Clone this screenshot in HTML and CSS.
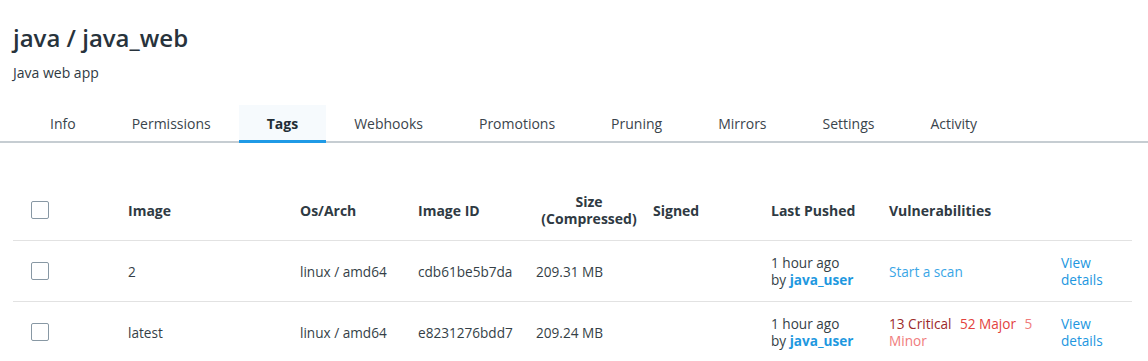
FILE: index.html
```html
<!DOCTYPE html>
<html lang="en">
<head>
    <meta charset="UTF-8" />
    <meta name="viewport" content="width=device-width, initial-scale=1" />
    <title>java / java_web</title>
    <link rel="stylesheet" href="styles.css">
</head>
<body>
    <div class="repo-header">
        <h1 class="repo-title">java / java_web</h1>
        <p class="repo-desc">Java web app</p>
    </div>
    <nav class="tabs">
        <a class="tab">Info</a>
        <a class="tab">Permissions</a>
        <a class="tab active">Tags</a>
        <a class="tab">Webhooks</a>
        <a class="tab">Promotions</a>
        <a class="tab">Pruning</a>
        <a class="tab">Mirrors</a>
        <a class="tab">Settings</a>
        <a class="tab">Activity</a>
    </nav>
    <table class="tags-table">
        <colgroup>
            <col class="c-check"><col class="c-image"><col class="c-os"><col class="c-id"><col class="c-size">
            <col class="c-signed"><col class="c-pushed"><col class="c-vuln"><col class="c-action">
        </colgroup>
        <thead>
            <tr>
                <th class="check-cell"><span class="checkbox"></span></th>
                <th>Image</th>
                <th>Os/Arch</th>
                <th>Image ID</th>
                <th class="size-head">Size<br>(Compressed)</th>
                <th>Signed</th>
                <th>Last Pushed</th>
                <th>Vulnerabilities</th>
                <th></th>
            </tr>
        </thead>
        <tbody>
            <tr>
                <td class="check-cell"><span class="checkbox"></span></td>
                <td>2</td>
                <td>linux / amd64</td>
                <td>cdb61be5b7da</td>
                <td>209.31 MB</td>
                <td></td>
                <td>1 hour ago<br>by <a class="user">java_user</a></td>
                <td><a class="scan-link">Start a scan</a></td>
                <td><a class="details">View details</a></td>
            </tr>
            <tr>
                <td class="check-cell"><span class="checkbox"></span></td>
                <td>latest</td>
                <td>linux / amd64</td>
                <td>e8231276bdd7</td>
                <td>209.24 MB</td>
                <td></td>
                <td>1 hour ago<br>by <a class="user">java_user</a></td>
                <td class="vuln-cell"><span class="critical">13 Critical</span> <span class="major">52 Major</span> <span class="minor">5</span><br><span class="minor">Minor</span></td>
                <td><a class="details">View details</a></td>
            </tr>
        </tbody>
    </table>
</body>
</html>
```

FILE: styles.css
```css
body {
    font-family: 'Open Sans', 'Noto Sans', sans-serif;
    color: #2f3a43;
    margin: 0;
    padding: 0;
    background: #fff;
    font-size: 14px;
}
.repo-header {
    padding: 22px 13px 0;
}
.repo-title {
    margin: 0;
    font-size: 24px;
    line-height: 32px;
    font-weight: 600;
    color: #28333c;
}
.repo-desc {
    margin: 9px 0 0;
    font-size: 14px;
    line-height: 20px;
}
.tabs {
    display: flex;
    margin-top: 22px;
    padding-left: 22px;
    border-bottom: 2px solid #c6cdd2;
}
.tab {
    padding: 0 28px;
    height: 38px;
    line-height: 37px;
    font-size: 14px;
    color: #3a444c;
    border-bottom: 3px solid transparent;
    margin-bottom: -2px;
    box-sizing: border-box;
}
.tab.active {
    font-weight: 700;
    color: #232d35;
    background: #f6fafd;
    border-bottom-color: #1f9ae6;
}
.tags-table {
    margin: 37px 0 0 13px;
    width: 1119px;
    border-collapse: collapse;
    table-layout: fixed;
    font-size: 13.6px;
}
.c-check { width: 107px; }
.c-image { width: 172px; }
.c-os { width: 118px; }
.c-id { width: 118px; }
.c-size { width: 117px; }
.c-signed { width: 118px; }
.c-pushed { width: 118px; }
.c-vuln { width: 172px; }
.c-action { width: 79px; }
.tags-table th,
.tags-table td {
    padding: 0 8px;
    text-align: left;
    vertical-align: middle;
    line-height: 17px;
}
.tags-table th {
    height: 60px;
    font-weight: 700;
    font-size: 14px;
    color: #2f3a43;
    border-bottom: 1px solid #e2e2e2;
}
.tags-table td {
    height: 60px;
    color: #353f47;
    border-bottom: 1px solid #e2e2e2;
}
.tags-table tbody tr:last-child td {
    border-bottom: none;
}
.tags-table th.size-head {
    text-align: center;
    padding: 0 3px 0 8px;
}
.tags-table .check-cell {
    padding-left: 18px;
}
.checkbox {
    display: block;
    width: 16px;
    height: 16px;
    border: 1px solid #8898a4;
    border-radius: 2px;
}
.user {
    color: #1e98e0;
    font-weight: 700;
}
.scan-link {
    color: #3aa6e6;
}
.details {
    color: #2196e0;
    display: block;
}
.vuln-cell span {
    margin-right: 5px;
}
.critical { color: #9c2a2a; }
.major { color: #e3423e; }
.minor { color: #f07c7c; }
```
